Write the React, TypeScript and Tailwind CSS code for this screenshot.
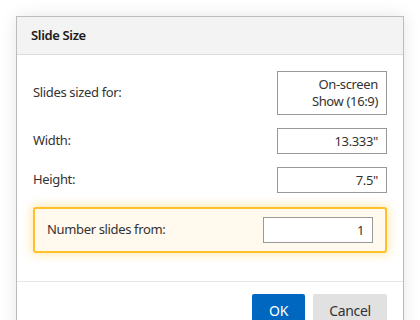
export default function App() {
  return (
    <div className="h-[320px] w-[420px] overflow-hidden bg-white pl-4 pt-4 font-['Noto_Sans',sans-serif] text-[13px] tracking-[-0.35px] text-[#333]">
      <div className="w-[388px] border border-[#bcbcbc] bg-white shadow-[0_0_16px_rgba(0,0,0,0.1)]">
        <div className="flex h-[38px] items-center border-b border-[#dcdcdc] bg-[#f3f3f3] pl-[14px] font-semibold text-[#1a1a1a]">
          Slide Size
        </div>
        <div className="flex flex-col gap-[13px] px-4 pb-[28px] pt-4">
          <div className="flex items-center justify-between">
            <span>Slides sized for:</span>
            <div className="w-[110px] border border-[#999] py-[4px] pr-2 text-right leading-[17px]">
              <div>On-screen</div>
              <div>Show (16:9)</div>
            </div>
          </div>
          <div className="flex items-center justify-between">
            <span>Width:</span>
            <div className="h-[26px] w-[110px] border border-[#999] pr-2 text-right leading-6">13.333"</div>
          </div>
          <div className="flex items-center justify-between">
            <span>Height:</span>
            <div className="h-[26px] w-[110px] border border-[#999] pr-2 text-right leading-6">7.5"</div>
          </div>
          <div className="mt-px flex items-center justify-between rounded-[3px] border-2 border-[#ffc02a] bg-[#fff9ee] px-3 py-2 shadow-[0_0_10px_2px_rgba(255,196,50,0.35)]">
            <span>Number slides from:</span>
            <div className="h-[26px] w-[110px] border border-[#999] bg-white pr-2 text-right leading-6">1</div>
          </div>
        </div>
        <div className="flex justify-end gap-2 border-t border-[#e6e6e6] px-4 pt-[12px] pb-4">
          <button className="h-8 w-[53px] rounded-[2px] bg-[#0067c0] text-[14px] text-white">OK</button>
          <button className="h-8 w-[74px] rounded-[2px] bg-[#e1e1e1] text-[14px] text-[#333]">Cancel</button>
        </div>
      </div>
    </div>
  );
}
